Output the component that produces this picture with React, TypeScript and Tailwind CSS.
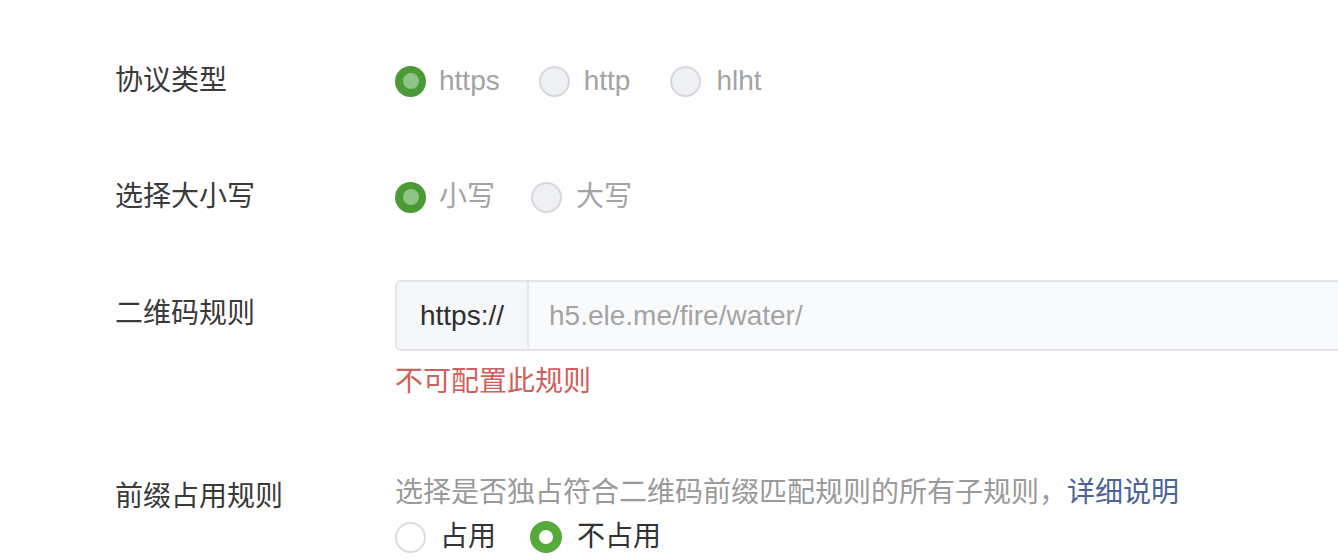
import React from "react";

const font = { fontFamily: '"Liberation Sans", "Noto Sans CJK SC", sans-serif' };

type RadioKind = "disabledChecked" | "disabledUnchecked" | "checked" | "unchecked";

function Circle({ kind }: { kind: RadioKind }) {
  if (kind === "disabledChecked")
    return (
      <span className="flex h-[31px] w-[31px] shrink-0 items-center justify-center rounded-full bg-[#4b9a36]">
        <span className="h-[16px] w-[16px] rounded-full bg-[#8ec484]" />
      </span>
    );
  if (kind === "disabledUnchecked")
    return <span className="h-[31px] w-[31px] shrink-0 rounded-full border-2 border-[#d6d8dc] bg-[#eef0f3]" />;
  if (kind === "checked")
    return <span className="h-[32px] w-[32px] shrink-0 rounded-full border-[9px] border-[#55aa3c] bg-white" />;
  return <span className="h-[31px] w-[31px] shrink-0 rounded-full border-2 border-[#dcdcdc] bg-white" />;
}

function Radio({ kind, label, last, gap = "ml-[13px]", space = "mr-[37px]" }: { kind: RadioKind; label: string; last?: boolean; gap?: string; space?: string }) {
  const disabled = kind === "disabledChecked" || kind === "disabledUnchecked";
  return (
    <label className={`flex items-center ${last ? "" : space}`}>
      <Circle kind={kind} />
      <span className={`${gap} text-[28px] leading-none ${disabled ? "text-[#a3a3a3]" : "text-[#333333]"}`}>{label}</span>
    </label>
  );
}

export default function App() {
  return (
    <div className="h-[560px] w-[1338px] overflow-hidden bg-white pl-[115px] pt-[46px]" style={font}>
      {/* Row 1 */}
      <div className="flex h-[70px] items-center">
        <div className="w-[280px] shrink-0 text-[28px] text-[#3a3a3a]">协议类型</div>
        <div className="flex items-center">
          <Radio kind="disabledChecked" label="https" space="mr-[39px]" />
          <Radio kind="disabledUnchecked" label="http" space="mr-[40px]" gap="ml-[14px]" />
          <Radio kind="disabledUnchecked" label="hlht" gap="ml-[15px]" last />
        </div>
      </div>

      {/* Row 2 */}
      <div className="mt-[46px] flex h-[70px] items-center">
        <div className="w-[280px] shrink-0 text-[28px] text-[#3a3a3a]">选择大小写</div>
        <div className="flex items-center">
          <Radio kind="disabledChecked" label="小写" space="mr-[36px]" />
          <Radio kind="disabledUnchecked" label="大写" gap="ml-[14px]" last />
        </div>
      </div>

      {/* Row 3 */}
      <div className="mt-[48px] flex items-start">
        <div className="flex h-[68px] w-[280px] shrink-0 items-center text-[28px] text-[#3a3a3a]">二维码规则</div>
        <div className="flex shrink-0 flex-col">
          <div className="flex h-[71px] w-[1000px] overflow-hidden rounded-[6px] border-2 border-[#e3e5e9] bg-[#f9fafc]">
            <div className="flex w-[132px] items-center justify-center border-r-2 border-[#e6e8ec] bg-[#f6f7f9] text-[28px] text-[#2f2f2f]">
              https://
            </div>
            <div className="flex items-center pl-[20px] text-[28px] text-[#a4a4a4]">h5.ele.me/fire/water/</div>
          </div>
          <div className="mt-[11px] text-[28px] leading-[40px] text-[#d0615c]">不可配置此规则</div>
        </div>
      </div>

      {/* Row 4 */}
      <div className="mt-[69px] flex items-start">
        <div className="mt-[4px] w-[280px] shrink-0 text-[28px] leading-[44px] text-[#3a3a3a]">前缀占用规则</div>
        <div className="flex flex-col">
          <div className="text-[28px] leading-[44px] text-[#9a9a9a]">
            选择是否独占符合二维码前缀匹配规则的所有子规则，<span className="text-[#4a6494]">详细说明</span>
          </div>
          <div className="flex h-[44px] items-center">
            <Radio kind="unchecked" label="占用" gap="ml-[14px]" space="mr-[34px]" />
            <Radio kind="checked" label="不占用" gap="ml-[15px]" last />
          </div>
        </div>
      </div>
    </div>
  );
}
